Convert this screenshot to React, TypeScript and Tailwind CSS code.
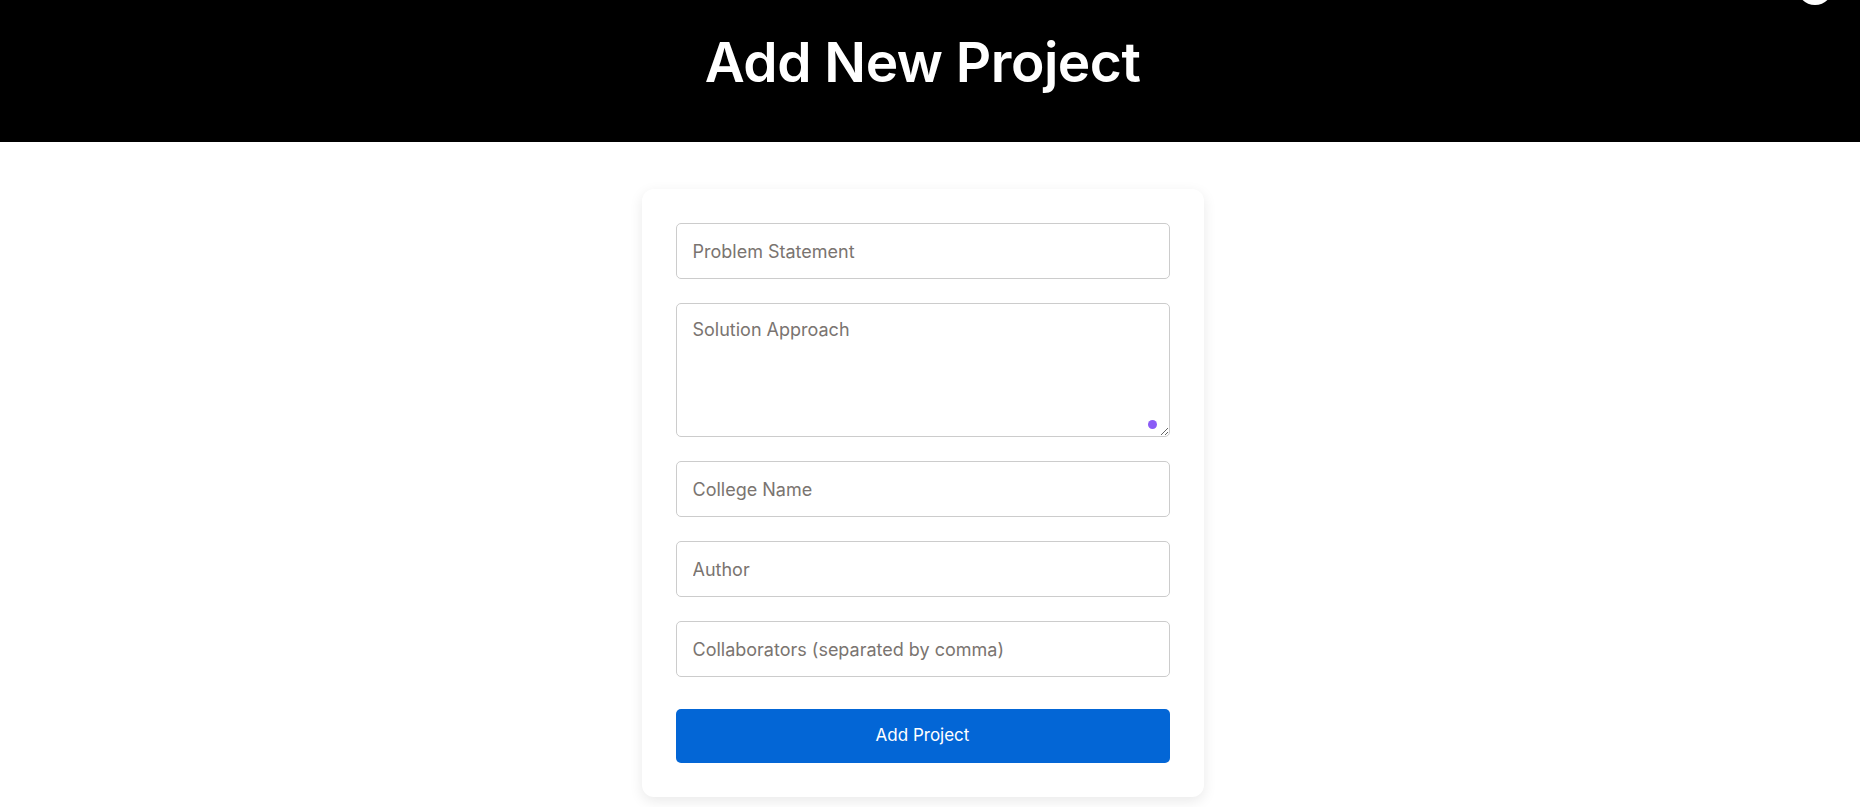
import React, { useState } from 'react';

// Add New Project page: black title bar, centered form card.

const fieldClass =
  'w-full h-[56px] rounded-[5px] border border-[#cccccc] bg-white px-[16px] text-[18px] text-[#333] placeholder:text-[#7a7470] outline-none';

export default function App() {
  const [form, setForm] = useState({
    problem: '',
    solution: '',
    college: '',
    author: '',
    collaborators: '',
  });

  const update = (key: keyof typeof form) => (e: React.ChangeEvent<HTMLInputElement | HTMLTextAreaElement>) =>
    setForm({ ...form, [key]: e.target.value });

  return (
    <div
      className="relative min-h-[850px] bg-white"
      style={{ fontFamily: 'Inter, "Noto Sans", sans-serif' }}
    >
      {/* header */}
      <header className="flex h-[142px] justify-center bg-black pr-[15px] pt-[26px]">
        <h1 className="text-[55px] font-semibold leading-[72px] tracking-[-0.5px] text-white">
          Add New Project
        </h1>
      </header>

      {/* partly hidden round toggle at the top right */}
      <span className="absolute right-[27px] top-[-31px] h-[36px] w-[36px] rounded-full bg-white" />

      <main className="flex justify-center pr-[15px] pt-[47px] pb-[40px]">
        <form
          onSubmit={(e) => e.preventDefault()}
          className="flex w-[562px] flex-col rounded-[12px] bg-white p-[34px] shadow-[0_4px_14px_rgba(0,0,0,0.09)]"
        >
          <input
            className={fieldClass}
            placeholder="Problem Statement"
            value={form.problem}
            onChange={update('problem')}
          />

          <div className="relative mt-[24px]">
            <textarea
              className="block h-[134px] w-full rounded-[5px] border border-[#cccccc] bg-white px-[16px] pt-[12px] text-[18px] text-[#333] placeholder:text-[#7a7470] outline-none"
              placeholder="Solution Approach"
              value={form.solution}
              onChange={update('solution')}
            />
            <span className="pointer-events-none absolute bottom-[8px] right-[13px] h-[9px] w-[9px] rounded-full bg-[#8b5cf6]" />
          </div>

          <input
            className={`${fieldClass} mt-[24px]`}
            placeholder="College Name"
            value={form.college}
            onChange={update('college')}
          />
          <input
            className={`${fieldClass} mt-[24px]`}
            placeholder="Author"
            value={form.author}
            onChange={update('author')}
          />
          <input
            className={`${fieldClass} mt-[24px]`}
            placeholder="Collaborators (separated by comma)"
            value={form.collaborators}
            onChange={update('collaborators')}
          />

          <button
            type="submit"
            className="mt-[32px] h-[54px] w-full rounded-[5px] bg-[#0366d6] text-[17px] text-white"
          >
            Add Project
          </button>
        </form>
      </main>
    </div>
  );
}
